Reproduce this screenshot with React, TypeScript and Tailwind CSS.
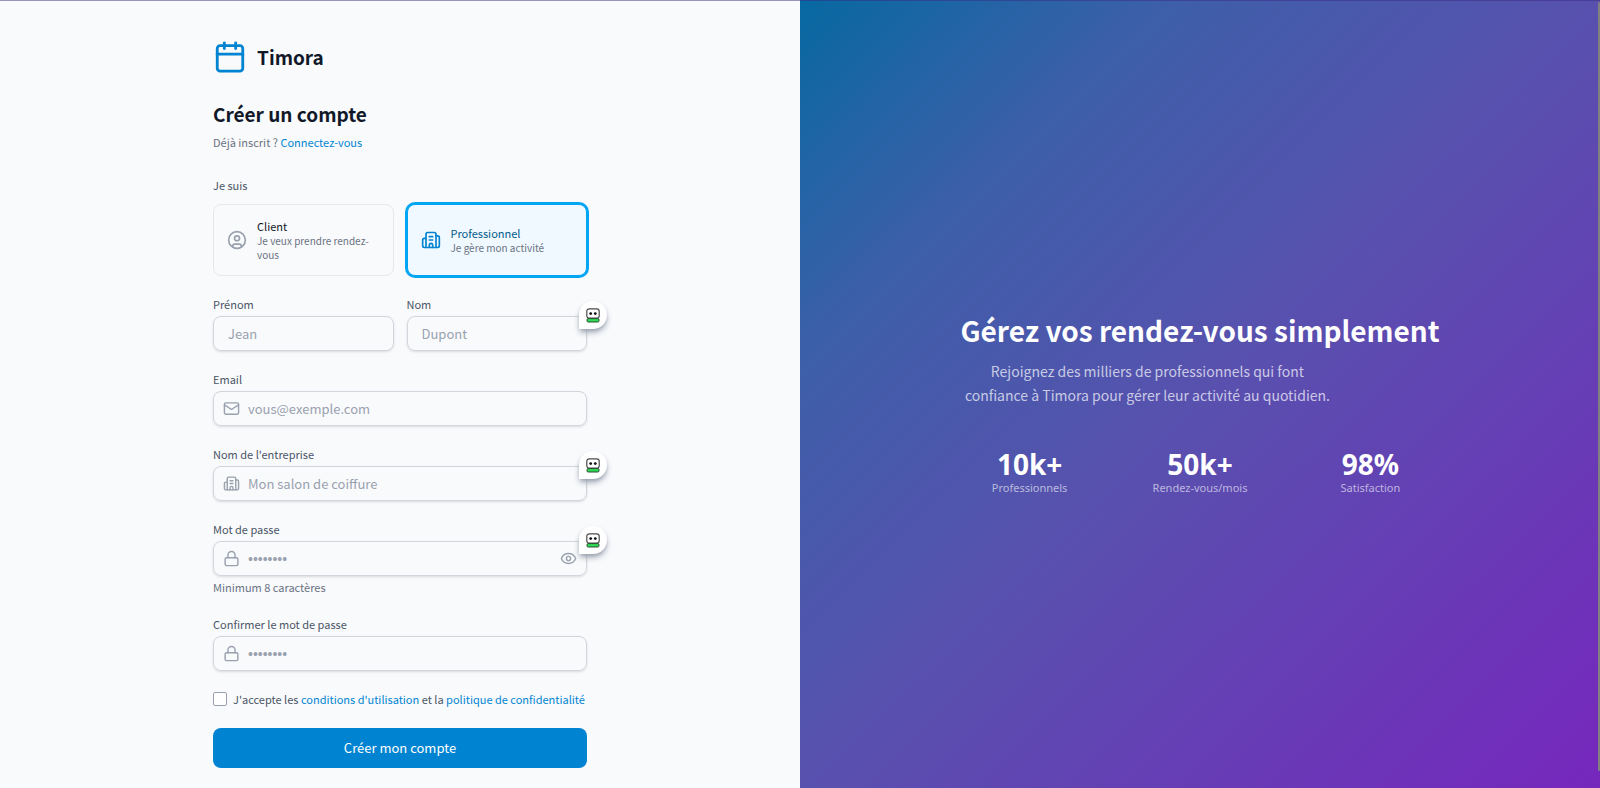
import React, { useState } from 'react';
import { Building2, Calendar, CircleUser, Eye, Lock, Mail } from 'lucide-react';

type Role = 'client' | 'pro';

const PasswordManagerBadge: React.FC = () => (
  <span className="absolute -top-[15px] -right-5 flex h-7 w-7 items-center justify-center rounded-full rounded-bl-none bg-white shadow-md shadow-gray-400">
    <svg width="14" height="15" viewBox="0 0 14 15" aria-hidden="true">
      <rect x="0.8" y="0.8" width="12.4" height="9.4" rx="2.5" fill="#fff" stroke="#4b4b4b" strokeWidth="1.2" />
      <circle cx="4.7" cy="5.6" r="1.4" fill="#111" />
      <circle cx="9.3" cy="5.6" r="1.4" fill="#111" />
      <rect x="1" y="10.6" width="12" height="3.4" rx="1.2" fill="#2fdc55" stroke="#2b4a33" strokeWidth="1" />
    </svg>
  </span>
);

interface FieldProps {
  id: string;
  label: string;
  placeholder: string;
  type?: string;
  icon?: React.ReactNode;
  badge?: boolean;
  hint?: string;
  secret?: boolean;
  children?: React.ReactNode;
}

const Field: React.FC<FieldProps> = ({ id, label, placeholder, type = 'text', icon, badge, hint, secret, children }) => (
  <div>
    <label htmlFor={id} className="block text-[11px] leading-5 text-gray-600">
      {label}
    </label>
    <div className="relative mt-0.5">
      {icon && <span className="pointer-events-none absolute inset-y-0 left-2.5 flex items-center text-gray-400">{icon}</span>}
      <input
        id={id}
        type={type}
        placeholder={placeholder}
        className={`block h-[35px] w-full rounded-lg border border-gray-300 bg-transparent pr-3 text-gray-900 shadow-sm placeholder:text-gray-400 focus:outline-none ${icon ? 'pl-[34px]' : 'pl-3.5'} ${secret ? "font-['Noto_Sans',sans-serif] text-[13px] placeholder:font-bold" : 'text-[13px]'}`}
      />
      {children}
      {badge && <PasswordManagerBadge />}
    </div>
    {hint && <p className="mt-0.5 text-[11px] leading-[18px] text-gray-500">{hint}</p>}
  </div>
);

interface RoleCardProps {
  selected: boolean;
  title: string;
  description: string;
  icon: React.ReactNode;
  onSelect: () => void;
}

const RoleCard: React.FC<RoleCardProps> = ({ selected, title, description, icon, onSelect }) => (
  <button
    type="button"
    aria-pressed={selected}
    onClick={onSelect}
    className={`flex h-[72px] items-center gap-2.5 rounded-lg border px-[13px] text-left ${
      selected ? 'border-sky-500 bg-sky-50 ring-2 ring-sky-500' : 'border-gray-200'
    }`}
  >
    <span className={`shrink-0 ${selected ? 'text-sky-600' : 'text-gray-400'}`}>{icon}</span>
    <span>
      <span className={`block text-[11px] leading-4 ${selected ? 'text-sky-800' : 'text-gray-900'}`}>{title}</span>
      <span className="block text-[10px] leading-[14px] text-gray-500">{description}</span>
    </span>
  </button>
);

const stats = [
  { value: '10k+', label: 'Professionnels' },
  { value: '50k+', label: 'Rendez-vous/mois' },
  { value: '98%', label: 'Satisfaction' },
];

export default function App() {
  const [role, setRole] = useState<Role>('pro');
  const [showPassword, setShowPassword] = useState(false);

  return (
    <div className="relative flex h-screen overflow-hidden bg-[#f9fafc] font-['Noto_Sans_CJK_SC',sans-serif]">
      <div className="absolute inset-x-0 top-0 z-10 h-px bg-[#3b2a80]/50" />
      <div className="absolute top-0.5 right-0 bottom-[17px] z-10 w-0.5 rounded bg-[#808080]" />

      <main className="flex flex-1 justify-center">
        <div className="w-[374px] pt-10">
          <div className="flex items-center gap-2.5">
            <Calendar size={34} className="text-sky-600" />
            <span className="text-[19px] font-bold text-gray-900">Timora</span>
          </div>

          <h1 className="mt-6 text-[19px] leading-8 font-bold text-gray-900">Créer un compte</h1>
          <p className="mt-0.5 text-[11px] leading-5 text-gray-500">
            Déjà inscrit ?{' '}
            <a href="#" className="text-sky-600">
              Connectez-vous
            </a>
          </p>

          <form className="mt-[23px]" onSubmit={(e) => e.preventDefault()}>
            <p className="text-[11px] leading-5 text-gray-600">Je suis</p>
            <div className="mt-[9px] grid grid-cols-2 gap-[13px]">
              <RoleCard
                selected={role === 'client'}
                title="Client"
                description="Je veux prendre rendez-vous"
                icon={<CircleUser size={20} />}
                onSelect={() => setRole('client')}
              />
              <RoleCard
                selected={role === 'pro'}
                title="Professionnel"
                description="Je gère mon activité"
                icon={<Building2 size={20} />}
                onSelect={() => setRole('pro')}
              />
            </div>

            <div className="mt-[18px] flex flex-col gap-[18px]">
              <div className="grid grid-cols-2 gap-[13px]">
                <Field id="firstName" label="Prénom" placeholder="Jean" />
                <Field id="lastName" label="Nom" placeholder="Dupont" badge />
              </div>
              <Field id="email" type="email" label="Email" placeholder="vous@exemple.com" icon={<Mail size={17} />} />
              <Field
                id="company"
                label="Nom de l'entreprise"
                placeholder="Mon salon de coiffure"
                icon={<Building2 size={17} />}
                badge
              />
              <Field
                id="password"
                type={showPassword ? 'text' : 'password'}
                label="Mot de passe"
                placeholder="••••••••"
                icon={<Lock size={17} />}
                hint="Minimum 8 caractères"
                badge
                secret
              >
                <button
                  type="button"
                  aria-label="Afficher le mot de passe"
                  onClick={() => setShowPassword(!showPassword)}
                  className="absolute inset-y-0 right-2.5 flex items-center text-gray-400"
                >
                  <Eye size={17} />
                </button>
              </Field>
              <Field
                id="confirm"
                type="password"
                label="Confirmer le mot de passe"
                placeholder="••••••••"
                icon={<Lock size={17} />}
                secret
              />
            </div>

            <div className="mt-[18px] flex items-center gap-1.5">
              <input
                id="terms"
                type="checkbox"
                className="h-3.5 w-3.5 shrink-0 appearance-none rounded-xs border border-gray-400 bg-white checked:bg-sky-600"
              />
              <label htmlFor="terms" className="text-[11px] leading-5 whitespace-nowrap text-gray-600">
                J'accepte les{' '}
                <a href="#" className="text-sky-600">
                  conditions d'utilisation
                </a>{' '}
                et la{' '}
                <a href="#" className="text-sky-600">
                  politique de confidentialité
                </a>
              </label>
            </div>

            <button type="submit" className="mt-[19px] h-10 w-full rounded-lg bg-sky-600 text-[13px] text-white">
              Créer mon compte
            </button>
          </form>
        </div>
      </main>

      <aside className="flex flex-1 items-center justify-center bg-[linear-gradient(to_bottom_right,#0769a1,#3d5fa9_23%,#5851ae_50%,#7627bd)] pt-[18px]">
        <div className="text-center">
          <h2 className="text-[28px] leading-9 font-bold text-white">Gérez vos rendez-vous simplement</h2>
          <p className="mt-[11px] w-[374px] text-sm leading-6 text-white/70">
            Rejoignez des milliers de professionnels qui font confiance à Timora pour gérer leur activité au quotidien.
          </p>
          <dl className="mt-[39px] grid grid-cols-3 gap-8">
            {stats.map((stat) => (
              <div key={stat.label} className="flex flex-col-reverse">
                <dt className="font-['Noto_Sans',sans-serif] text-[11px] leading-3 text-white/60">{stat.label}</dt>
                <dd className="font-['Noto_Sans',sans-serif] text-[28px] leading-9 font-bold text-white">{stat.value}</dd>
              </div>
            ))}
          </dl>
        </div>
      </aside>
    </div>
  );
}
